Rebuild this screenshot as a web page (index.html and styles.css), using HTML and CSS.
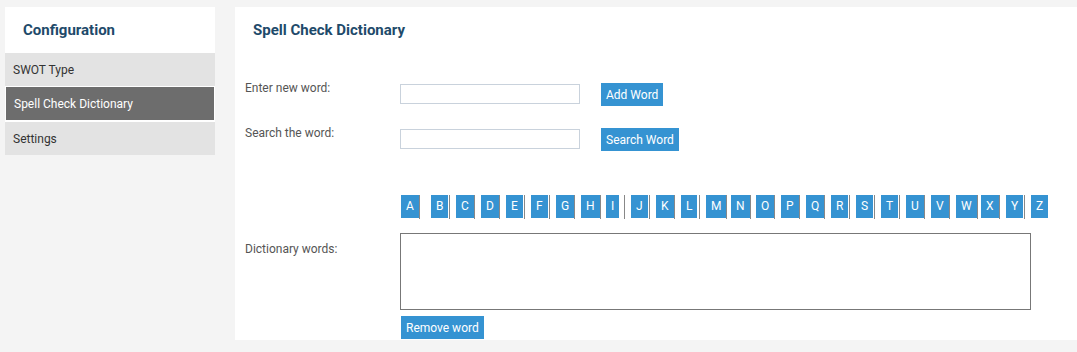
FILE: index.html
```html
<!DOCTYPE html>
<html lang="en">
<head>
<meta charset="UTF-8">
<meta name="viewport" content="width=device-width, initial-scale=1.0">
<title>Spell Check Dictionary</title>
<link rel="stylesheet" href="styles.css">
</head>
<body>
  <div class="page">
    <!-- Left configuration menu -->
    <aside class="sidebar">
      <div class="sidebar-head">Configuration</div>
      <ul class="menu">
        <li><a href="#">SWOT Type</a></li>
        <li class="active"><a href="#">Spell Check Dictionary</a></li>
        <li><a href="#">Settings</a></li>
      </ul>
    </aside>

    <!-- Dictionary panel -->
    <main class="panel">
      <h2 class="panel-title">Spell Check Dictionary</h2>

      <div class="form-row first">
        <label for="newWord">Enter new word:</label>
        <input type="text" id="newWord" name="newWord">
        <button type="button" class="btn">Add Word</button>
      </div>

      <div class="form-row">
        <label for="searchWord">Search the word:</label>
        <input type="text" id="searchWord" name="searchWord">
        <button type="button" class="btn">Search Word</button>
      </div>

      <div class="letters">
        <div class="letter first"><a href="#" class="letter-btn"><span>A</span></a></div>
        <div class="letter"><a href="#" class="letter-btn"><span>B</span></a></div>
        <div class="letter"><a href="#" class="letter-btn"><span>C</span></a></div>
        <div class="letter"><a href="#" class="letter-btn"><span>D</span></a></div>
        <div class="letter"><a href="#" class="letter-btn"><span>E</span></a></div>
        <div class="letter"><a href="#" class="letter-btn"><span>F</span></a></div>
        <div class="letter"><a href="#" class="letter-btn"><span>G</span></a></div>
        <div class="letter"><a href="#" class="letter-btn"><span>H</span></a></div>
        <div class="letter"><a href="#" class="letter-btn"><span>I</span></a></div>
        <div class="letter"><a href="#" class="letter-btn"><span>J</span></a></div>
        <div class="letter"><a href="#" class="letter-btn"><span>K</span></a></div>
        <div class="letter"><a href="#" class="letter-btn"><span>L</span></a></div>
        <div class="letter"><a href="#" class="letter-btn"><span>M</span></a></div>
        <div class="letter"><a href="#" class="letter-btn"><span>N</span></a></div>
        <div class="letter"><a href="#" class="letter-btn"><span>O</span></a></div>
        <div class="letter"><a href="#" class="letter-btn"><span>P</span></a></div>
        <div class="letter"><a href="#" class="letter-btn"><span>Q</span></a></div>
        <div class="letter"><a href="#" class="letter-btn"><span>R</span></a></div>
        <div class="letter"><a href="#" class="letter-btn"><span>S</span></a></div>
        <div class="letter"><a href="#" class="letter-btn"><span>T</span></a></div>
        <div class="letter"><a href="#" class="letter-btn"><span>U</span></a></div>
        <div class="letter"><a href="#" class="letter-btn"><span>V</span></a></div>
        <div class="letter"><a href="#" class="letter-btn"><span>W</span></a></div>
        <div class="letter"><a href="#" class="letter-btn"><span>X</span></a></div>
        <div class="letter"><a href="#" class="letter-btn"><span>Y</span></a></div>
        <div class="letter last"><a href="#" class="letter-btn"><span>Z</span></a></div>
      </div>

      <div class="form-row dict-row">
        <label for="dictWords">Dictionary words:</label>
        <textarea id="dictWords" name="dictWords"></textarea>
      </div>

      <button type="button" class="btn remove-btn">Remove word</button>
    </main>
  </div>
</body>
</html>
```

FILE: styles.css
```css
html, body {
  margin: 0;
  padding: 0;
}

body {
  font-family: Roboto, "Liberation Sans", Arial, sans-serif;
  font-size: 12px;
  background-color: #F4F4F4;
  color: #333333;
  overflow: hidden;
}

.page {
  display: flex;
  align-items: flex-start;
  gap: 20px;
  padding: 7px 0 0 5px;
}

/* Sidebar */
.sidebar {
  width: 210px;
  flex: none;
}

.sidebar-head {
  height: 46px;
  line-height: 46px;
  padding-left: 18px;
  background-color: #FFFFFF;
  color: #1E4A6A;
  font-size: 15px;
  font-weight: bold;
}

.menu {
  list-style: none;
  margin: 0;
  padding: 0;
  background-color: #FFFFFF;
}

.menu li a {
  display: block;
  height: 31px;
  line-height: 31px;
  padding: 2px 0 0 8px;
  background-color: #E3E3E3;
  color: #333333;
  text-decoration: none;
}

.menu li.active {
  border: 1px solid #FFFFFF;
  margin-bottom: 1px;
}

.menu li.active a {
  background-color: #6D6D6D;
  color: #FFFFFF;
}

/* Main panel */
.panel {
  flex: 1;
  background-color: #FFFFFF;
  padding-bottom: 1px;
}

.panel-title {
  margin: 0;
  height: 46px;
  line-height: 46px;
  padding-left: 18px;
  color: #1E4A6A;
  font-size: 15px;
  font-weight: bold;
}

.form-row {
  display: flex;
  align-items: flex-start;
  padding-left: 10px;
  margin-top: 20px;
}

.form-row.first {
  margin-top: 28px;
}

.form-row label {
  width: 155px;
  flex: none;
  line-height: 14px;
  color: #555555;
}

.form-row input {
  width: 180px;
  height: 20px;
  margin: 3px 0 0 0;
  padding: 0 4px;
  border: 1px solid #C9D2DC;
  box-sizing: border-box;
  font-family: inherit;
  font-size: 12px;
}

.btn {
  height: 23px;
  padding: 0 5px;
  border: none;
  background-color: #3593D2;
  color: #FFFFFF;
  font-family: inherit;
  font-size: 12px;
  cursor: pointer;
}

.form-row .btn {
  margin: 2px 0 0 21px;
}

/* Alphabet filter */
.letters {
  display: flex;
  margin: 44px 0 0 166px;
}

.letter {
  width: 25px;
  flex: none;
}

.letter.first {
  width: 30px;
}

.letter-btn {
  display: inline-flex;
  min-width: 18px;
  height: 24px;
  border-right: 1px solid #888888;
  text-decoration: none;
}

.letter.last .letter-btn {
  border-right: none;
}

.letter-btn span {
  height: 23px;
  line-height: 23px;
  padding: 0 5px;
  background-color: #3593D2;
  color: #FFFFFF;
}

/* Dictionary words */
.dict-row {
  margin-top: 14px;
}

.dict-row label {
  margin-top: 9px;
}

.dict-row textarea {
  width: 631px;
  height: 77px;
  margin: 0;
  border: 1px solid #777777;
  box-sizing: border-box;
  resize: none;
  font-family: inherit;
}

.remove-btn {
  display: block;
  margin: 6px 0 0 166px;
}
```
